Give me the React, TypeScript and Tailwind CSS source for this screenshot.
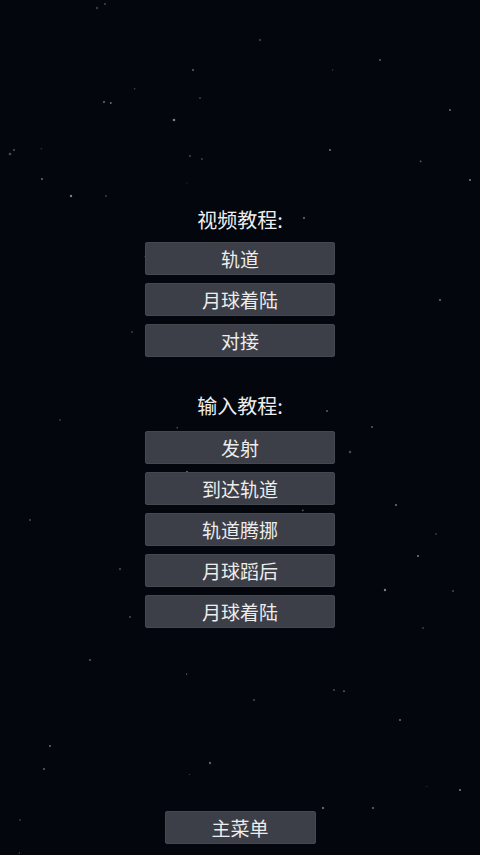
import type { ReactNode } from "react"

const videoTutorials = ["轨道", "月球着陆", "对接"]
const inputTutorials = ["发射", "到达轨道", "轨道腾挪", "月球蹈后", "月球着陆"]

const fixedStars: [number, number, number][] = [
  [97, 8, 1.2], [105, 4, 0.9], [193, 70, 1.1], [104, 102, 1], [174, 120, 1.3],
  [200, 98, 1], [10, 154, 1.3], [14, 150, 0.9], [42, 179, 1], [71, 196, 1.2],
  [106, 196, 1], [350, 452, 1.2], [322, 348, 1], [304, 218, 1.1], [150, 565, 1],
  [120, 569, 1.2], [453, 591, 1], [44, 769, 1.1], [50, 746, 1], [385, 590, 1.2],
  [423, 628, 1], [334, 690, 1], [372, 427, 1], [396, 505, 1.1], [418, 556, 1],
  [436, 534, 0.9], [254, 700, 1], [210, 763, 1.2], [373, 808, 1], [323, 808, 1.1],
  [257, 837, 0.9], [312, 260, 1], [327, 411, 1], [156, 474, 1], [187, 472, 1],
  [285, 460, 1], [130, 617, 1], [300, 626, 0.9], [440, 300, 1], [470, 180, 1],
  [60, 420, 0.9], [30, 520, 1], [90, 660, 1], [400, 720, 1], [460, 790, 1],
  [20, 820, 0.9], [260, 40, 1], [380, 60, 1], [450, 110, 1], [330, 150, 0.9],
]

function seeded(n: number) {
  let s = n
  return () => {
    s = (s * 9301 + 49297) % 233280
    return s / 233280
  }
}

const rand = seeded(17)
const extraStars: [number, number, number][] = Array.from({ length: 18 }, () => [
  rand() * 480,
  rand() * 855,
  0.5 + rand() * 0.5,
])

function Starfield() {
  return (
    <svg className="absolute inset-0 h-full w-full" viewBox="0 0 480 855" aria-hidden>
      {[...fixedStars, ...extraStars].map(([x, y, r], i) => (
        <circle key={i} cx={x} cy={y} r={r} fill="#b9bdc8" opacity={0.3 + (i % 5) * 0.09} />
      ))}
    </svg>
  )
}

function MenuButton({ children, wide = true }: { children: ReactNode; wide?: boolean }) {
  return (
    <button
      className={
        wide
          ? "flex h-[33px] w-[190px] items-center justify-center rounded-[2px] border border-[#45484f] bg-[#3c3f47] text-[19px] leading-none text-[#ededed]"
          : "flex h-[33px] w-[151px] items-center justify-center rounded-[2px] border border-[#45484f] bg-[#3c3f47] text-[19px] leading-none text-[#ededed]"
      }
    >
      {children}
    </button>
  )
}

export default function App() {
  return (
    <div
      className="relative h-[855px] w-[480px] overflow-hidden bg-[#04060e]"
      style={{ fontFamily: '"Noto Sans CJK SC", "Noto Sans", sans-serif' }}
    >
      <Starfield />
      <div className="relative flex h-full flex-col items-center">
        <div className="mt-[207px] flex flex-col items-center">
          <h2 className="mb-[9px] text-[20px] leading-[26px] text-[#eeeeee]">视频教程:</h2>
          <div className="flex flex-col gap-[8px]">
            {videoTutorials.map((t) => (
              <MenuButton key={t}>{t}</MenuButton>
            ))}
          </div>
        </div>

        <div className="mt-[36px] flex flex-col items-center">
          <h2 className="mb-[12px] text-[20px] leading-[26px] text-[#eeeeee]">输入教程:</h2>
          <div className="flex flex-col gap-[8px]">
            {inputTutorials.map((t, i) => (
              <MenuButton key={i}>{t}</MenuButton>
            ))}
          </div>
        </div>

        <div className="mt-auto mb-[11px]">
          <MenuButton wide={false}>主菜单</MenuButton>
        </div>
      </div>
    </div>
  )
}
